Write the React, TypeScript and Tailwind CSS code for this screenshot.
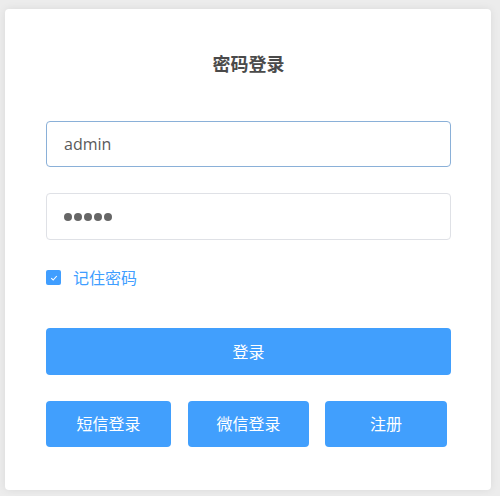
import React from "react";

export default function App() {
  const font = { fontFamily: '"Open Sans", "Noto Sans CJK SC", sans-serif' };
  return (
    <div className="w-[500px] h-[496px] bg-[#ececec] pt-[9px] pl-[5px]" style={font}>
      <div className="w-[486px] h-[481px] bg-white rounded-[4px] shadow-[0_0_8px_rgba(0,0,0,0.08)] pt-[42px] pl-[41px] pr-[40px] flex flex-col">
        <div className="text-center text-[18px] leading-[26px] font-bold text-[#4a4a4a]">密码登录</div>
        <div className="mt-[44px] h-[46px] border border-[#8ab0d8] rounded-[4px] flex items-center pl-[17px] text-[16px] text-[#5a5a5a]">
          admin
        </div>
        <div className="mt-[26px] h-[47px] border border-[#dfe1e6] rounded-[4px] flex items-center pl-[17px] gap-[2px]">
          {[0, 1, 2, 3, 4].map((i) => (
            <span key={i} className="w-[8px] h-[8px] rounded-full bg-[#666]" />
          ))}
        </div>
        <div className="mt-[29px] flex items-center h-[17px]">
          <span className="w-[15px] h-[15px] rounded-[2px] bg-[#409eff] flex items-center justify-center">
            <svg width="10" height="10" viewBox="0 0 10 10">
              <path d="M2.2 5.2 L4.2 7 L7.8 3" stroke="white" strokeWidth="1.1" fill="none" />
            </svg>
          </span>
          <span className="ml-[12px] text-[16px] text-[#409eff]">记住密码</span>
        </div>
        <div className="mt-[42px] h-[47px] rounded-[4px] bg-[#419ffd] flex items-center justify-center text-white text-[16px]">
          登录
        </div>
        <div className="mt-[26px] flex items-center h-[46px]">
          <div className="w-[125px] h-[46px] rounded-[4px] bg-[#419ffd] flex items-center justify-center text-white text-[16px]">短信登录</div>
          <div className="ml-[17px] w-[121px] h-[46px] rounded-[4px] bg-[#419ffd] flex items-center justify-center text-white text-[16px]">微信登录</div>
          <div className="ml-[16px] w-[122px] h-[46px] rounded-[4px] bg-[#419ffd] flex items-center justify-center text-white text-[16px]">注册</div>
        </div>
      </div>
    </div>
  );
}
